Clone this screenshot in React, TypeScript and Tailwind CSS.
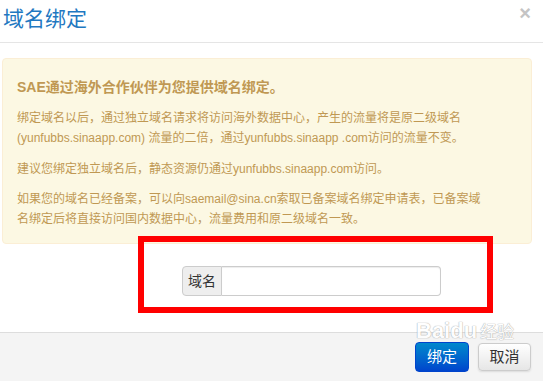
import React from "react";

const font = { fontFamily: '"Liberation Sans", "Noto Sans CJK SC", sans-serif' };

export default function App() {
  return (
    <div
      className="relative w-[543px] h-[381px] overflow-hidden bg-white"
      style={font}
    >
      {/* Header */}
      <div className="h-[43px] border-b border-[#e5e5e5] flex items-start justify-between">
        <h3 className="pl-[3px] pt-[6px] text-[21px] leading-[26px] text-[#1f78c1] font-normal">
          域名绑定
        </h3>
        <span className="mr-[12px] mt-[3px] text-[20px] leading-[20px] font-bold text-[#c4c4c4]">
          ×
        </span>
      </div>

      {/* Body */}
      <div className="h-[289px] pt-[15px]">
        <div className="ml-[2px] w-[530px] h-[186px] rounded-[4px] border border-[#fbeed5] bg-[#fcf8e3] pl-[14px] pr-[44px] pt-[18px] text-[#c09853]">
          <h4 className="text-[14px] leading-[20px] font-bold">
            SAE通过海外合作伙伴为您提供域名绑定。
          </h4>
          <p className="mt-[11px] text-[12px] leading-[20px]">
            绑定域名以后，通过独立域名请求将访问海外数据中心，产生的流量将是原二级域名(yunfubbs.sinaapp.com)
            流量的二倍，通过yunfubbs.sinaapp .com访问的流量不变。
          </p>
          <p className="mt-[11px] text-[12px] leading-[20px]">
            建议您绑定独立域名后，静态资源仍通过yunfubbs.sinaapp.com访问。
          </p>
          <p className="mt-[10px] text-[12px] leading-[20px]">
            如果您的域名已经备案，可以向saemail@sina.cn索取已备案域名绑定申请表，已备案域名绑定后将直接访问国内数据中心，流量费用和原二级域名一致。
          </p>
        </div>

        <div className="mt-[22px] ml-[182px] flex h-[30px] w-[259px]">
          <span className="flex w-[40px] items-center justify-center rounded-l-[4px] border border-[#cccccc] bg-[#eeeeee] text-[14px] text-[#333]">
            域名
          </span>
          <input
            className="flex-1 rounded-r-[4px] border border-l-0 border-[#cccccc] bg-white px-2 text-[14px] outline-none shadow-[inset_0_1px_1px_rgba(0,0,0,0.075)]"
            type="text"
          />
        </div>
      </div>

      {/* Footer */}
      <div className="h-[49px] border-t border-[#dddddd] bg-[#f4f4f4] flex items-center justify-end gap-[9px] pr-[12px]">
        <button className="h-[30px] w-[54px] rounded-[4px] border border-[#0044cc] bg-gradient-to-b from-[#0088cc] to-[#0044cc] text-[15px] text-white">
          绑定
        </button>
        <button className="h-[28px] w-[53px] rounded-[4px] border border-[#cccccc] bg-gradient-to-b from-white to-[#e6e6e6] text-[15px] text-[#333] shadow-[0_1px_2px_rgba(0,0,0,0.1)]">
          取消
        </button>
      </div>

      {/* Red annotation */}
      <div className="absolute left-[138px] top-[236px] h-[77px] w-[355px] border-[6px] border-[#ff0000]" />

      {/* Watermark */}
      <div className="pointer-events-none absolute left-[416px] top-[318px] text-white opacity-80">
        <div className="text-[22px] font-bold leading-[26px] [text-shadow:0_0_1px_#999,0_0_1px_#999]">
          Baidu<span className="ml-[3px] text-[17px] font-normal">经验</span>
        </div>
      </div>
    </div>
  );
}
